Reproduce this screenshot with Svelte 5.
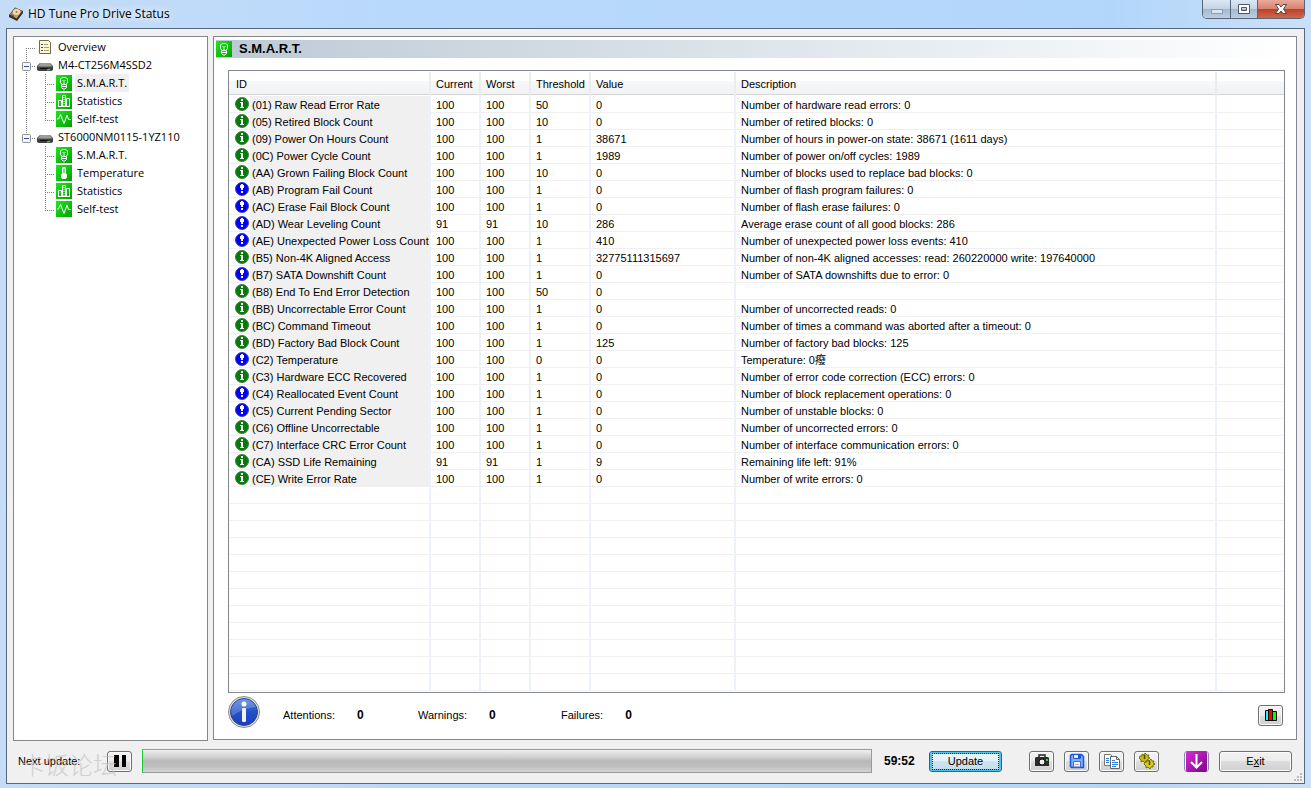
<script>
  const columns = [
    { name: 'ID', width: 202 },
    { name: 'Current', width: 50 },
    { name: 'Worst', width: 50 },
    { name: 'Threshold', width: 60 },
    { name: 'Value', width: 145 },
    { name: 'Description', width: 481 }
  ];

  // status, id, current, worst, threshold, value, description
  const attributes = [
    ['ok', '(01) Raw Read Error Rate', 100, 100, 50, '0', 'Number of hardware read errors: 0'],
    ['ok', '(05) Retired Block Count', 100, 100, 10, '0', 'Number of retired blocks: 0'],
    ['ok', '(09) Power On Hours Count', 100, 100, 1, '38671', 'Number of hours in power-on state: 38671 (1611 days)'],
    ['ok', '(0C) Power Cycle Count', 100, 100, 1, '1989', 'Number of power on/off cycles: 1989'],
    ['ok', '(AA) Grown Failing Block Count', 100, 100, 10, '0', 'Number of blocks used to replace bad blocks: 0'],
    ['note', '(AB) Program Fail Count', 100, 100, 1, '0', 'Number of flash program failures: 0'],
    ['note', '(AC) Erase Fail Block Count', 100, 100, 1, '0', 'Number of flash erase failures: 0'],
    ['note', '(AD) Wear Leveling Count', 91, 91, 10, '286', 'Average erase count of all good blocks: 286'],
    ['note', '(AE) Unexpected Power Loss Count', 100, 100, 1, '410', 'Number of unexpected power loss events: 410'],
    ['ok', '(B5) Non-4K Aligned Access', 100, 100, 1, '32775111315697', 'Number of non-4K aligned accesses: read: 260220000 write: 197640000'],
    ['note', '(B7) SATA Downshift Count', 100, 100, 1, '0', 'Number of SATA downshifts due to error: 0'],
    ['ok', '(B8) End To End Error Detection', 100, 100, 50, '0', ''],
    ['ok', '(BB) Uncorrectable Error Count', 100, 100, 1, '0', 'Number of uncorrected reads: 0'],
    ['ok', '(BC) Command Timeout', 100, 100, 1, '0', 'Number of times a command was aborted after a timeout: 0'],
    ['ok', '(BD) Factory Bad Block Count', 100, 100, 1, '125', 'Number of factory bad blocks: 125'],
    ['note', '(C2) Temperature', 100, 100, 0, '0', 'Temperature: 0癈'],
    ['ok', '(C3) Hardware ECC Recovered', 100, 100, 1, '0', 'Number of error code correction (ECC) errors: 0'],
    ['note', '(C4) Reallocated Event Count', 100, 100, 1, '0', 'Number of block replacement operations: 0'],
    ['note', '(C5) Current Pending Sector', 100, 100, 1, '0', 'Number of unstable blocks: 0'],
    ['ok', '(C6) Offline Uncorrectable', 100, 100, 1, '0', 'Number of uncorrected errors: 0'],
    ['ok', '(C7) Interface CRC Error Count', 100, 100, 1, '0', 'Number of interface communication errors: 0'],
    ['ok', '(CA) SSD Life Remaining', 91, 91, 1, '9', 'Remaining life left: 91%'],
    ['ok', '(CE) Write Error Rate', 100, 100, 1, '0', 'Number of write errors: 0']
  ];
  const emptyRows = Array(12).fill('');

  let drives = $state([
    { name: 'M4-CT256M4SSD2', open: true, pages: ['S.M.A.R.T.', 'Statistics', 'Self-test'] },
    { name: 'ST6000NM0115-1YZ110', open: true, pages: ['S.M.A.R.T.', 'Temperature', 'Statistics', 'Self-test'] }
  ]);
  let selected = $state('0/S.M.A.R.T.');

  const counters = [
    { label: 'Attentions:', value: 0 },
    { label: 'Warnings:', value: 0 },
    { label: 'Failures:', value: 0 }
  ];
</script>

{#snippet pageIcon(name)}
  <svg class="page-icon" width="16" height="16" viewBox="0 0 16 16" aria-hidden="true">
    <rect width="16" height="16" fill="url(#green)" />
    {#if name === 'S.M.A.R.T.'}
      <path d="M6 9.500 4.500 7.500V4L6 2.500H10L11.500 4V7.500L10 9.500Z" fill="none" stroke="#fff" />
      <path d="M6.500 5 8 6.500 9.500 5M8 6.500V9" fill="none" stroke="#c9ffc9" />
      <path d="M5.500 9.500V12.500L7 14H9L10.500 12.500V9.500M6 11.500H10" fill="none" stroke="#fff" />
    {:else if name === 'Statistics'}
      <path d="M2.500 13V7.500H5.500V13M6.500 13V2.500H9.500V13M10.500 13V5.500H13.500V13M2 13.500H14" fill="none" stroke="#fff" />
      <path d="M8 4V13" stroke="#fff" stroke-dasharray="1 1" />
    {:else if name === 'Temperature'}
      <path d="M7 2H9L10 3V8.500L11 9.500V12.500L9.500 14H6.500L5 12.500V9.500L6 8.500V3Z" fill="#fff" />
      <path d="M8 3.500V8" stroke="#1a9a1a" />
    {:else}
      <path d="M1 8H2.500L4.500 3.500 8 12.500 11 4 12.500 8.500H15" fill="none" stroke="#fff" />
    {/if}
  </svg>
{/snippet}

{#snippet driveIcon()}
  <svg class="drive-icon" width="18" height="16" viewBox="0 0 18 16" aria-hidden="true">
    <path d="M4 6H14L17 9V13L15 14H3L1 13V9Z" fill="#3f3f3f" />
    <path d="M4.500 6H13.500L16 9H2Z" fill="#9d9d9d" />
    <path d="M1.500 9.500H16.500" stroke="#777" />
    <path d="M4 11.500H12" stroke="#111" />
    <path d="M11 12H14V13.500H11Z" fill="#1fd02f" />
  </svg>
{/snippet}

<svg class="defs" width="0" height="0" aria-hidden="true">
  <defs>
    <linearGradient id="green" x1="0" y1="0" x2="1" y2="1">
      <stop offset="0" stop-color="#1ee61e" />
      <stop offset="1" stop-color="#04a004" />
    </linearGradient>
  </defs>
</svg>

<div class="window">
  <header class="titlebar">
    <svg width="16" height="16" viewBox="0 0 16 16" aria-hidden="true">
      <path d="M1 9 7 1.500 15 5V7L9 15 1 11Z" fill="#33302e" />
      <path d="M2 8.500 7.500 2 14 5 8.500 12.500Z" fill="#c79a64" />
      <ellipse cx="8.500" cy="6" rx="3.600" ry="3" fill="#f3d9ae" />
      <circle cx="8.500" cy="6" r="1" fill="#a36f3b" />
      <path d="M3 8.500 6 10.500" stroke="#5d5650" stroke-width="1.500" />
    </svg>
    <h1>HD Tune Pro Drive Status</h1>
    <div class="controls">
      <button class="min" aria-label="Minimize">
        <svg width="14" height="12" viewBox="0 0 14 12"><rect x="1.500" y="6.500" width="11" height="4" fill="#dbe4ee" stroke="#8c9fb5" /></svg>
      </button>
      <button class="max" aria-label="Maximize">
        <svg width="14" height="12" viewBox="0 0 14 12"><path d="M1.500 1.500H12.500V10.500H1.500ZM4.500 4.500V7.500H9.500V4.500Z" fill="#fff" fill-rule="evenodd" stroke="#4c596b" /></svg>
      </button>
      <button class="close" aria-label="Close">
        <svg width="14" height="12" viewBox="0 0 14 12"><path d="M1.500 1.500H5L7 4 9 1.500H12.500L9.500 6 12.500 10.500H9L7 8 5 10.500H1.500L4.500 6Z" fill="#fff" stroke="#5a4545" /></svg>
      </button>
    </div>
  </header>

  <div class="client">
    <main>
      <nav class="tree">
        <div class="node">
          <svg class="guide" width="22" height="18" viewBox="0 0 22 18" aria-hidden="true">
            <path d="M12.500 10V18M12 10.500H22" />
          </svg>
          <svg class="drive-icon" width="18" height="16" viewBox="0 0 18 16" aria-hidden="true">
            <path d="M3.500 1.500H12.500L14.500 3.500V14.500H3.500Z" fill="#fffcc8" stroke="#6b6b52" />
            <path d="M5 5.500H7M5 8.500H7M5 11.500H7" stroke="#2c3fae" />
            <path d="M8 5.500H12M8 8.500H13M8 11.500H13" stroke="#a09f86" />
          </svg>
          <a href="#overview">Overview</a>
        </div>
        {#each drives as drive, i}
          <div class="node">
            <svg class="guide" width="22" height="18" viewBox="0 0 22 18" aria-hidden="true">
              <path d={i < drives.length - 1 ? 'M12.500 0V18M12 10.500H22' : 'M12.500 0V10M12 10.500H22'} />
            </svg>
            <button class="toggle" aria-label="Toggle {drive.name}" onclick={() => (drive.open = !drive.open)}>
              <svg width="9" height="9" viewBox="0 0 9 9">
                <rect x="0.500" y="0.500" width="8" height="8" rx="1" fill="#f7f7f7" stroke="#919191" />
                <path d={drive.open ? 'M2 4.500H7' : 'M2 4.500H7M4.500 2V7'} stroke="#3b4fa0" />
              </svg>
            </button>
            {@render driveIcon()}
            <a href="#drive{i}">{drive.name}</a>
          </div>
          {#if drive.open}
            {#each drive.pages as page, j}
              <div class="node">
                <svg class="guide" width="41" height="18" viewBox="0 0 41 18" aria-hidden="true">
                  {#if i < drives.length - 1}<path d="M12.500 0V18" />{/if}
                  <path d={j < drive.pages.length - 1 ? 'M31.500 0V18M31 10.500H41' : 'M31.500 0V10M31 10.500H41'} />
                </svg>
                {@render pageIcon(page)}
                <a
                  href="#{page}"
                  class:selected={selected === `${i}/${page}`}
                  onclick={() => (selected = `${i}/${page}`)}
                >{page}</a>
              </div>
            {/each}
          {/if}
        {/each}
      </nav>

      <section class="panel">
        <div class="panel-title">
          {@render pageIcon('S.M.A.R.T.')}
          <h2>S.M.A.R.T.</h2>
        </div>

        <div class="list">
          <table>
            <colgroup>
              {#each columns as column}
                <col style="width: {column.width}px" />
              {/each}
              <col />
            </colgroup>
            <thead>
              <tr>
                {#each columns as column}
                  <th>{column.name}</th>
                {/each}
                <th></th>
              </tr>
            </thead>
            <tbody>
              {#each attributes as [status, ...cells]}
                <tr>
                  {#each cells as cell, c}
                    {#if c === 0}
                      <td class="id">
                        <div>
                          <span class="status">
                            <svg width="14" height="14" viewBox="0 0 14 14" aria-hidden="true">
                              {#if status === 'ok'}
                                <circle cx="7" cy="7" r="6.500" fill="#067a0b" stroke="#3f7f42" />
                                <path d="M6 2H8V4H6ZM5 5H8V10H9V11H5V10H6V6H5Z" fill="#fff" />
                              {:else}
                                <circle cx="7" cy="7" r="6.500" fill="#0000f5" stroke="#3c3cc0" />
                                <path d="M6 2H8V3H9V6H8V8H6V6H5V3H6ZM6 9H8V11H6Z" fill="#fff" />
                              {/if}
                            </svg>
                          </span>
                          <span class="name">{cell}</span>
                        </div>
                      </td>
                    {:else}
                      <td>{cell}</td>
                    {/if}
                  {/each}
                  <td></td>
                </tr>
              {/each}
              {#each emptyRows as _}
                <tr>
                  {#each columns as _column}
                    <td></td>
                  {/each}
                  <td></td>
                </tr>
              {/each}
            </tbody>
          </table>
        </div>

        <div class="summary">
          <svg class="info" width="32" height="32" viewBox="0 0 32 32" aria-hidden="true">
            <defs>
              <linearGradient id="blue" x1="0" y1="0" x2="0" y2="1">
                <stop offset="0" stop-color="#4a7fe0" />
                <stop offset="0.500" stop-color="#2350c4" />
                <stop offset="1" stop-color="#1b3fc0" />
              </linearGradient>
            </defs>
            <circle cx="16" cy="16" r="15.500" fill="#e4e4e4" stroke="#8b8b8b" />
            <circle cx="16" cy="16" r="13.500" fill="url(#blue)" stroke="#2c4585" />
            <path d="M3 16A13 13 0 0 1 28 11Q15 12 4 20Z" fill="#fff" opacity="0.200" />
            <circle cx="16" cy="8" r="2.500" fill="#fff" />
            <rect x="14" y="12" width="4" height="14" rx="1" fill="#f1f1f1" />
          </svg>
          <dl>
            {#each counters as counter}
              <div>
                <dt>{counter.label}</dt>
                <dd>{counter.value}</dd>
              </div>
            {/each}
          </dl>
          <button class="btn icon" aria-label="Chart">
            <svg width="16" height="16" viewBox="0 0 16 16">
              <path d="M2.500 3.500H5.500V13.500H2.500Z" fill="#1ff" stroke="#000" />
              <path d="M9.500 4.500H13.500V13.500H9.500Z" fill="#0f0" stroke="#000" />
              <path d="M5.500 2.500H9.500V13.500H5.500Z" fill="#f00" stroke="#000" />
            </svg>
          </button>
        </div>
      </section>
    </main>

    <footer>
      <span class="next">Next update:</span>
      <button class="btn icon" aria-label="Pause">
        <svg width="16" height="16" viewBox="0 0 16 16"><path d="M2 2H7V14H2ZM10 2H14V14H10Z" fill="#000" /></svg>
      </button>
      <div class="progress" role="progressbar" aria-label="Time until next update" aria-valuenow="0"></div>
      <strong class="time">59:52</strong>
      <button class="btn update"><span>Update</span></button>
      <div class="tools">
        <button class="btn icon" aria-label="Screenshot">
          <svg width="16" height="16" viewBox="0 0 16 16">
            <path d="M5 5V2H11V5" fill="none" stroke="#222" stroke-width="1.500" />
            <path d="M2 4H14L15 5V13H1V5Z" fill="#2b2b2b" />
            <circle cx="8" cy="9" r="3" fill="#eee" stroke="#111" />
            <rect x="12" y="6" width="2" height="2" fill="#1bdc3c" />
          </svg>
        </button>
        <button class="btn icon" aria-label="Save">
          <svg width="16" height="16" viewBox="0 0 16 16">
            <path d="M2.500 1.500H12.500L14.500 3.500V14.500H2.500L1.500 13.500V2.500Z" fill="#7fb0fb" stroke="#1c55e0" stroke-width="1.500" />
            <path d="M4.500 1.500H11.500V5.500H4.500Z" fill="#e9eef8" stroke="#1c55e0" />
            <rect x="9" y="2" width="2" height="3" fill="#1c55e0" />
            <path d="M4.500 8.500H11.500V14H4.500Z" fill="#f6f4e6" stroke="#3a6be2" />
            <path d="M6 11.500H10" stroke="#b9b49a" />
          </svg>
        </button>
        <button class="btn icon" aria-label="Copy">
          <svg width="16" height="16" viewBox="0 0 16 16">
            <path d="M0.500 1.500H6.500L8.500 3.500V12.500H0.500Z" fill="#fff" stroke="#777" />
            <path d="M2 5.500H5M2 7.500H5M2 9.500H5" stroke="#2d7fe0" />
            <path d="M6.500 3.500H12.500L15.500 6.500V15.500H6.500Z" fill="#fff" stroke="#666" />
            <path d="M12.500 3.500V6.500H15.500" fill="none" stroke="#666" />
            <path d="M8 7.500H11M8 9.500H14M8 11.500H14M8 13.500H12" stroke="#2d7fe0" />
          </svg>
        </button>
        <button class="btn icon gears" aria-label="Options">
          <svg width="16" height="16" viewBox="0 0 16 16">
            <path d="M0 5 1 3 3 3V1L5 2 6 0 8 2 10 2 9 4 11 5 9 6 9 8 7 8 6 10 4 8 2 9 2 7Z" fill="#c9bd12" stroke="#5e5600" stroke-width="0.800" />
            <path d="M5 11 6 9 8 9 8 7 10 8 12 6 13 8 15 8 14 10 16 11 14 12 14 14 12 14 11 16 9 14 7 15 7 13Z" fill="#d8cc20" stroke="#5e5600" stroke-width="0.800" />
            <path d="M5.500 2V6M10.500 8V12" stroke="#4d4700" stroke-width="1.500" />
          </svg>
        </button>
        <button class="btn icon download" aria-label="Minimize to tray">
          <svg width="21" height="21" viewBox="0 0 21 21">
            <defs>
              <linearGradient id="purple" x1="0" y1="0" x2="1" y2="1">
                <stop offset="0" stop-color="#d22fd2" />
                <stop offset="1" stop-color="#84008c" />
              </linearGradient>
            </defs>
            <rect width="21" height="21" rx="2" fill="url(#purple)" />
            <path d="M10.500 3V16M5 11 10.500 16.500 16 11" fill="none" stroke="#fff" stroke-width="2" />
          </svg>
        </button>
        <button class="btn exit">E<u>x</u>it</button>
      </div>
      <span class="watermark">卡饭论坛</span>
      <svg class="grip" width="9" height="9" viewBox="0 0 9 9" aria-hidden="true">
        <path d="M6 0H8V2H6ZM3 3H5V5H3ZM6 3H8V5H6ZM0 6H2V8H0ZM3 6H5V8H3ZM6 6H8V8H6Z" fill="#bcbcbc" />
      </svg>
    </footer>
  </div>
</div>

<style>
  .defs {
    position: absolute;
  }

  .window {
    display: flex;
    flex-direction: column;
    box-sizing: border-box;
    min-height: 100vh;
    padding: 0 6px 4px;
    background: linear-gradient(to right, #c4dcf6 0, #b9d9fb 400px, #b2d6fa 85%, #cbe0f8 100%);
    font-family: "Liberation Sans", "Noto Sans CJK SC", sans-serif;
    font-size: 11px;
    line-height: 16px;
    color: #000;
  }

  button {
    padding: 0;
    font: inherit;
    color: inherit;
  }

  svg {
    display: block;
    flex: none;
  }

  .titlebar {
    display: flex;
    align-items: center;
    height: 28px;
    padding-left: 2px;
  }

  .titlebar h1 {
    flex: 1;
    margin: 0 0 0 4px;
    font: 12px/16px "Open Sans", "Noto Sans", sans-serif;
    text-shadow: 0 0 8px #fff, 0 0 8px #fff;
  }

  .controls {
    display: flex;
    align-self: flex-start;
    border: 1px solid #56657a;
    border-top: 0;
    border-radius: 0 0 5px 5px;
    overflow: hidden;
  }

  .controls button {
    display: flex;
    align-items: center;
    justify-content: center;
    width: 27px;
    height: 18px;
    border: 0;
    border-right: 1px solid #56657a;
    background: linear-gradient(#dbe7f4 0, #c3d1e2 50%, #a3b7ce 50%, #bccee2 100%);
  }

  .controls button.min {
    width: 28px;
  }

  .controls button.close {
    width: 46px;
    border: 0;
    background: linear-gradient(#e9a99a 0, #d6816d 50%, #b8402a 50%, #d0684a 100%);
  }

  .client {
    display: flex;
    flex: 1;
    flex-direction: column;
    border: 1px solid #57677d;
    background: #f0f0f0;
  }

  main {
    display: flex;
    flex: 1;
    gap: 5px;
    padding: 7px 7px 0 6px;
  }

  .tree {
    flex: none;
    box-sizing: border-box;
    width: 195px;
    padding-top: 1px;
    border: 1px solid #828790;
    background: #fff;
    font: 11px/18px "Open Sans", "Noto Sans", sans-serif;
  }

  .node {
    display: flex;
    align-items: center;
    height: 18px;
    white-space: nowrap;
  }

  .node a {
    padding: 0 2px;
    color: #000;
    text-decoration: none;
  }

  .node a.selected {
    background: #f0f0f0;
  }

  .guide path {
    fill: none;
    stroke: #7c7c7c;
    stroke-dasharray: 1 1;
  }

  .toggle {
    z-index: 1;
    margin: 2px 5px 0 -14px;
    border: 0;
    background: none;
  }

  .node .drive-icon {
    margin-right: 2px;
  }

  .node .page-icon {
    margin: 0 3px 0 1px;
  }

  .panel {
    display: flex;
    flex: 1;
    flex-direction: column;
    min-width: 0;
    margin-bottom: 1px;
    border: 1px solid #828790;
    background: #fff;
  }

  .panel-title {
    display: flex;
    align-items: center;
    height: 18px;
    margin: 3px 2px 12px;
    background: linear-gradient(to right, #bccad6, #fff);
  }

  .panel-title h2 {
    margin: 0 0 0 7px;
    font: bold 13px/18px "Liberation Sans", sans-serif;
  }

  .list {
    flex: 1;
    margin: 0 11px 0 14px;
    border: 1px solid #828790;
    overflow: hidden;
  }

  table {
    width: 100%;
    table-layout: fixed;
    border-spacing: 0;
  }

  th {
    height: 25px;
    padding: 0 0 0 5px;
    background:
      linear-gradient(#ebecee, #ebecee) right / 2px 24px no-repeat,
      linear-gradient(#fff 10px, #f7f8fa 10px, #f1f2f4 23px, #d5d5d5 23px, #d5d5d5 24px, #fff 24px);
    font-weight: normal;
    text-align: left;
    white-space: nowrap;
  }

  th:first-child {
    padding-left: 7px;
  }

  th:last-child {
    background: linear-gradient(#fff 10px, #f7f8fa 10px, #f1f2f4 23px, #d5d5d5 23px, #d5d5d5 24px, #fff 24px);
  }

  td {
    box-sizing: border-box;
    height: 17px;
    padding: 2px 0 0 5px;
    border-right: 2px solid #edf2f8;
    border-bottom: 1px solid #f0f0f0;
    line-height: 14px;
    white-space: nowrap;
  }

  td:last-child {
    border-right: 0;
  }

  .id {
    padding: 0;
    border-bottom: 0;
  }

  .id div {
    display: flex;
    height: 17px;
  }

  .status {
    box-sizing: border-box;
    width: 21px;
    padding: 1px 0 0 6px;
    border-bottom: 1px solid #f0f0f0;
  }

  .name {
    flex: 1;
    min-width: 0;
    padding-left: 2px;
    background: #f0f0f0;
    line-height: 18px;
  }

  .summary {
    display: flex;
    align-items: center;
    height: 44px;
    padding: 0 13px 2px 14px;
  }

  .info {
    align-self: flex-start;
    margin-top: 3px;
  }

  dl {
    display: grid;
    flex: 1;
    grid-template-columns: 135px 143px auto;
    margin: 0 0 0 23px;
  }

  dl div {
    display: flex;
    gap: 22px;
  }

  dd {
    margin: 0;
    font-size: 12px;
    font-weight: bold;
  }

  .btn {
    display: flex;
    align-items: center;
    justify-content: center;
    box-sizing: border-box;
    height: 21px;
    border: 1px solid #707070;
    border-radius: 3px;
    background: linear-gradient(#f2f2f2 0, #ebebeb 50%, #dddddd 50%, #cfcfcf 100%);
    box-shadow: inset 0 0 0 1px #fafafa;
  }

  .btn.icon {
    width: 25px;
  }

  footer {
    position: relative;
    display: flex;
    align-items: center;
    height: 40px;
    padding: 0 12px 2px 11px;
  }

  .next {
    width: 89px;
  }

  .progress {
    flex: 1;
    box-sizing: border-box;
    height: 24px;
    margin: 0 12px 0 10px;
    border: 1px solid #9a9a9a;
    border-left-color: #14c832;
    background: linear-gradient(#efefef 0, #c8c8c8 40%, #b8b8b8 50%, #bfbfbf 75%, #d3d3d3 100%);
  }

  .time {
    width: 45px;
    font-size: 12px;
  }

  .update {
    width: 73px;
    padding: 1px;
    border-color: #2c628b;
    background: linear-gradient(#eef6fb 0, #e0eff8 50%, #cde4f2 50%, #c3ddec 100%);
    box-shadow: inset 0 0 0 2px #4ac4f0;
  }

  .update span {
    flex: 1;
    margin: 0 2px;
    outline: 1px dotted #222;
    line-height: 15px;
  }

  .tools {
    display: flex;
    gap: 10px;
    margin-left: 27px;
  }

  .gears {
    margin-right: 15px;
  }

  .download {
    border-color: #8a8ab0;
    background: #fff;
  }

  .exit {
    width: 73px;
  }

  .watermark {
    position: absolute;
    bottom: 3px;
    left: 14px;
    font: 300 24px/32px "Noto Sans CJK SC", sans-serif;
    color: #c4c4c4;
    opacity: 0.7;
    pointer-events: none;
  }

  .grip {
    position: absolute;
    right: 1px;
    bottom: 1px;
  }
</style>
